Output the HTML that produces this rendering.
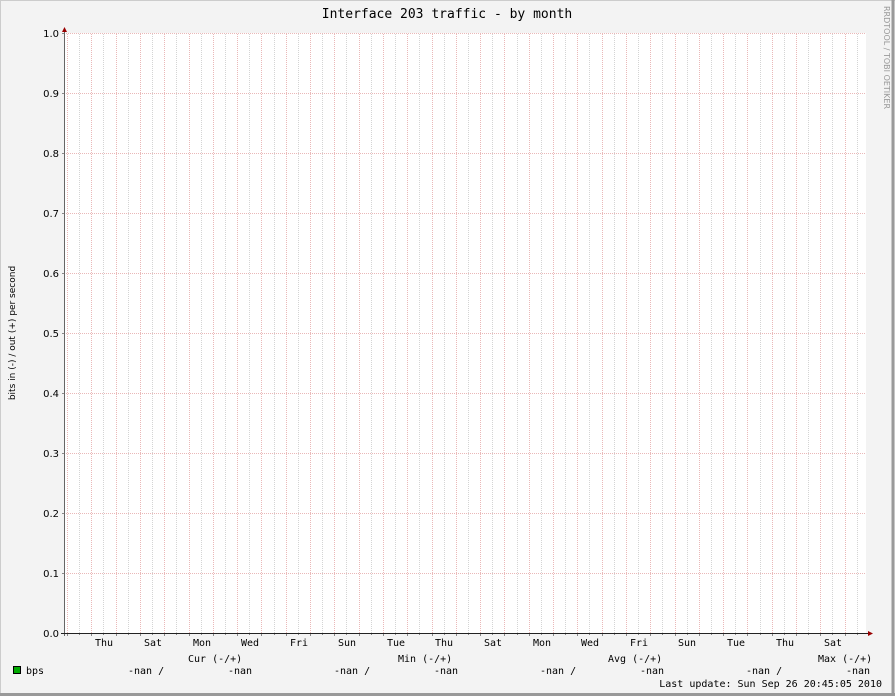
<!DOCTYPE html>
<html><head><meta charset="utf-8"><style>
html,body{margin:0;padding:0;background:#f3f3f3;}
svg{display:block}
text{font-family:"DejaVu Sans Mono","Liberation Mono",monospace;font-size:10px;fill:#000}
.s{font-family:"DejaVu Sans","Liberation Sans",sans-serif;}
</style></head><body>
<svg id="g" width="895" height="696" xmlns="http://www.w3.org/2000/svg">
<rect x="0" y="0" width="895" height="696" fill="#f3f3f3"/>
<line x1="0" y1="0.5" x2="895" y2="0.5" stroke="#ccc"/>
<line x1="0.5" y1="0" x2="0.5" y2="696" stroke="#ccc"/>
<line x1="893" y1="0" x2="893" y2="696" stroke="#999" stroke-width="3"/>
<line x1="0" y1="694.5" x2="895" y2="694.5" stroke="#999" stroke-width="3"/>
<rect x="65" y="33" width="801" height="600" fill="#fff"/>
<g id="vl"></g>
<g stroke="#eab8b8" stroke-dasharray="1 1">
<line x1="66" y1="33.5" x2="866" y2="33.5"/><line x1="66" y1="93.5" x2="866" y2="93.5"/>
<line x1="66" y1="153.5" x2="866" y2="153.5"/><line x1="66" y1="213.5" x2="866" y2="213.5"/>
<line x1="66" y1="273.5" x2="866" y2="273.5"/><line x1="66" y1="333.5" x2="866" y2="333.5"/>
<line x1="66" y1="393.5" x2="866" y2="393.5"/><line x1="66" y1="453.5" x2="866" y2="453.5"/>
<line x1="66" y1="513.5" x2="866" y2="513.5"/><line x1="66" y1="573.5" x2="866" y2="573.5"/>
</g>
<g stroke="#888"><line x1="62" y1="33.5" x2="65" y2="33.5"/><line x1="62" y1="93.5" x2="65" y2="93.5"/><line x1="62" y1="153.5" x2="65" y2="153.5"/><line x1="62" y1="213.5" x2="65" y2="213.5"/><line x1="62" y1="273.5" x2="65" y2="273.5"/><line x1="62" y1="333.5" x2="65" y2="333.5"/><line x1="62" y1="393.5" x2="65" y2="393.5"/><line x1="62" y1="453.5" x2="65" y2="453.5"/><line x1="62" y1="513.5" x2="65" y2="513.5"/><line x1="62" y1="573.5" x2="65" y2="573.5"/></g>
<line x1="64.5" y1="30" x2="64.5" y2="636" stroke="#666"/>
<line x1="61" y1="633.5" x2="869" y2="633.5" stroke="#222"/>
<polygon points="62,32 67,32 64.5,27" fill="#900"/>
<polygon points="868,631 868,636 873,633.5" fill="#900"/>
<text x="447" y="18" text-anchor="middle" style="font-size:13px">Interface 203 traffic - by month</text>
<text class="s" x="884" y="6" transform="rotate(90 884 6)" style="font-size:8px;fill:#999">RRDTOOL / TOBI OETIKER</text>
<text class="s" x="15" y="333" text-anchor="middle" transform="rotate(-90 15 333)" style="font-size:9px">bits in (-) / out (+) per second</text>
<g class="s" text-anchor="end" style="font-size:10px">
<text class="s" x="59" y="37">1.0</text><text class="s" x="59" y="97">0.9</text><text class="s" x="59" y="157">0.8</text><text class="s" x="59" y="217">0.7</text><text class="s" x="59" y="277">0.6</text><text class="s" x="59" y="337">0.5</text><text class="s" x="59" y="397">0.4</text><text class="s" x="59" y="457">0.3</text><text class="s" x="59" y="517">0.2</text><text class="s" x="59" y="577">0.1</text><text class="s" x="59" y="637">0.0</text>
</g>
<g text-anchor="middle">
<text x="104" y="646">Thu</text><text x="153" y="646">Sat</text><text x="202" y="646">Mon</text><text x="250" y="646">Wed</text><text x="299" y="646">Fri</text><text x="347" y="646">Sun</text><text x="396" y="646">Tue</text><text x="444" y="646">Thu</text><text x="493" y="646">Sat</text><text x="542" y="646">Mon</text><text x="590" y="646">Wed</text><text x="639" y="646">Fri</text><text x="687" y="646">Sun</text><text x="736" y="646">Tue</text><text x="785" y="646">Thu</text><text x="833" y="646">Sat</text>
</g>
<text x="188" y="662">Cur (-/+)</text>
<text x="398" y="662">Min (-/+)</text>
<text x="608" y="662">Avg (-/+)</text>
<text x="818" y="662">Max (-/+)</text>
<rect x="13.5" y="666.5" width="7" height="7" fill="#0a0" stroke="#000"/>
<text x="26" y="674">bps</text>
<text x="128" y="674">-nan /</text><text x="228" y="674">-nan</text>
<text x="334" y="674">-nan /</text><text x="434" y="674">-nan</text>
<text x="540" y="674">-nan /</text><text x="640" y="674">-nan</text>
<text x="746" y="674">-nan /</text><text x="846" y="674">-nan</text>
<text x="882" y="687" text-anchor="end">Last update: Sun Sep 26 20:45:05 2010</text>
</svg>
<script>
var g=document.getElementById('vl'),h='';
for(var k=0;k<66;k++){var x=Math.round(67+k*12.15);if(x>865)break;
var maj=(k%2==0);
h+='<line x1="'+(x+0.5)+'" y1="34" x2="'+(x+0.5)+'" y2="633" stroke="'+(maj?'#eab8b8':'#d4d4d4')+'" stroke-dasharray="1 1"/>';
h+='<line x1="'+(x+0.5)+'" y1="633" x2="'+(x+0.5)+'" y2="'+(maj?636:635)+'" stroke="#888"/>';}
g.innerHTML=h;
</script>
</body></html>
